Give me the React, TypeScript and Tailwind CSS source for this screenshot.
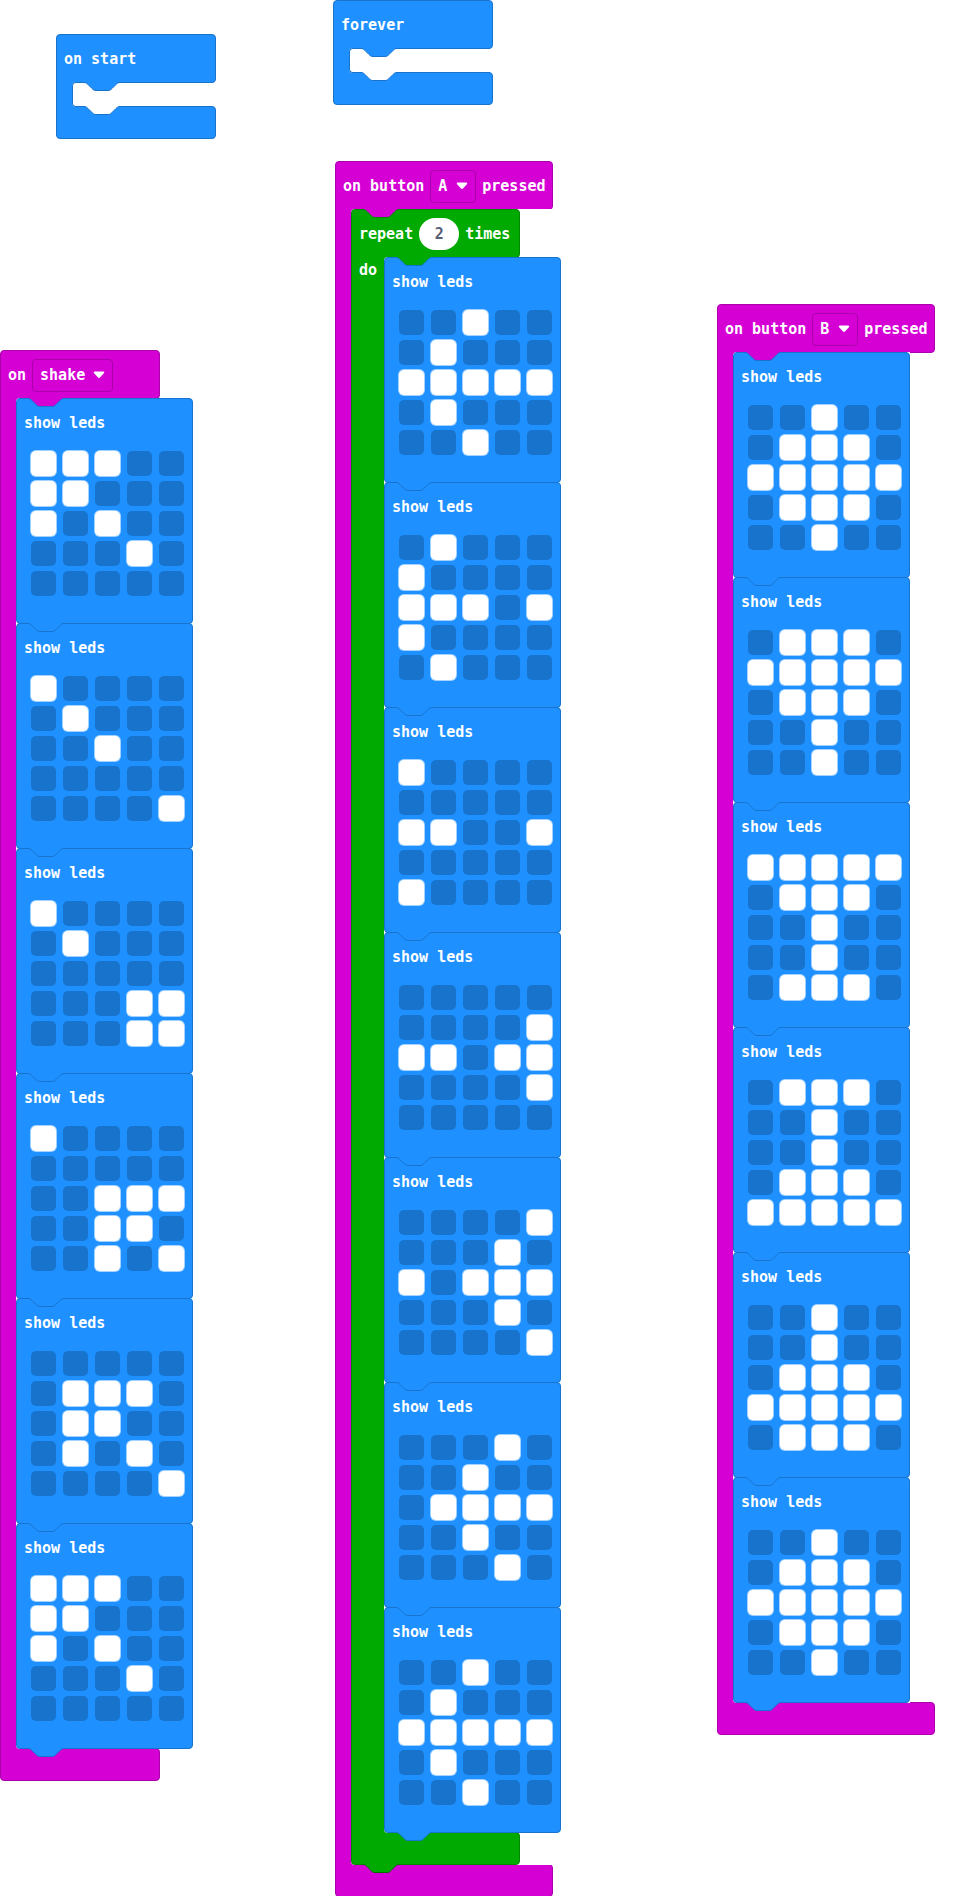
import React, { type ReactNode } from "react";

const SHAKE = [
  ["11100", "11000", "10100", "00010", "00000"],
  ["10000", "01000", "00100", "00000", "00001"],
  ["10000", "01000", "00000", "00011", "00011"],
  ["10000", "00000", "00111", "00110", "00101"],
  ["00000", "01110", "01100", "01010", "00001"],
  ["11100", "11000", "10100", "00010", "00000"],
];

const BUTTON_A = [
  ["00100", "01000", "11111", "01000", "00100"],
  ["01000", "10000", "11101", "10000", "01000"],
  ["10000", "00000", "11001", "00000", "10000"],
  ["00000", "00001", "11011", "00001", "00000"],
  ["00001", "00010", "10111", "00010", "00001"],
  ["00010", "00100", "01111", "00100", "00010"],
  ["00100", "01000", "11111", "01000", "00100"],
];

const BUTTON_B = [
  ["00100", "01110", "11111", "01110", "00100"],
  ["01110", "11111", "01110", "00100", "00100"],
  ["11111", "01110", "00100", "00100", "01110"],
  ["01110", "00100", "00100", "01110", "11111"],
  ["00100", "00100", "01110", "11111", "01110"],
  ["00100", "01110", "11111", "01110", "00100"],
];

type Tone = "blue" | "magenta" | "green";

const TONES: Record<Tone, string> = {
  blue: "bg-[#1e90ff] border-[#1873cc]",
  magenta: "bg-[#d400d4] border-[#aa00aa]",
  green: "bg-[#00aa00] border-[#008800]",
};

const TAB_TONES = {
  blue: "fill-[#1e90ff] stroke-[#1873cc]",
  magentaOnBlue: "fill-[#d400d4] stroke-[#1873cc]",
  magentaOnGreen: "fill-[#d400d4] stroke-[#008800]",
  green: "fill-[#00aa00] stroke-[#007000]",
  greenOnBlue: "fill-[#00aa00] stroke-[#1873cc]",
  white: "fill-white stroke-[#1873cc]",
};

/* Connector that pokes out of one block into the next */
function Tab({ tone, className }: { tone: keyof typeof TAB_TONES; className: string }) {
  const edge = "c2 0 3 1 4 2l4 4c1 1 2 2 4 2h12c2 0 3 -1 4 -2l4 -4c1 -1 2 -2 4 -2";
  return (
    <svg
      aria-hidden="true"
      width="36"
      height="10"
      viewBox="0 0 36 10"
      className={`pointer-events-none absolute z-10 overflow-visible ${TAB_TONES[tone]} ${className}`}
    >
      <path d={`M0 .5${edge}L33 -.2H3Z`} stroke="none" />
      <path d={`M0 .5${edge}`} fill="none" />
    </svg>
  );
}

function Leds({ rows, label }: { rows: string[]; label: string }) {
  return (
    <div className="relative h-[226px] w-[177px] rounded border border-[#1873cc] bg-[#1e90ff]">
      <div className="flex h-[52px] items-start px-[7px] pt-3">
        <span className="leading-6">show leds</span>
      </div>
      <div className="grid w-max grid-cols-5 gap-x-[7px] gap-y-[5px] pl-[14px]">
        {rows.flatMap((row, y) =>
          row.split("").map((led, x) => (
            <input
              key={`${x}-${y}`}
              type="checkbox"
              defaultChecked={led === "1"}
              aria-label={`${label}, led ${x + 1}, ${y + 1}`}
              className="block size-[25px] cursor-pointer appearance-none rounded-[5px] bg-[#1873cc] checked:bg-white checked:ring-1 checked:ring-white/60"
            />
          )),
        )}
      </div>
      <Tab tone="blue" className="top-full left-[11px]" />
    </div>
  );
}

function LedList({ frames, name }: { frames: string[][]; name: string }) {
  return (
    <div className="flex flex-col -space-y-px">
      {frames.map((rows, i) => (
        <Leds key={i} rows={rows} label={`${name} frame ${i + 1}`} />
      ))}
    </div>
  );
}

type WrapProps = {
  tone: Tone;
  width: string;
  arm?: string;
  armLabel?: string;
  header: ReactNode;
  children: ReactNode;
};

/* C-shaped block: header, arm down the left, foot */
function Wrap({ tone, width, arm = "w-5", armLabel, header, children }: WrapProps) {
  const skin = TONES[tone];
  return (
    <section className="relative w-max">
      <div className={`flex h-[49px] items-center rounded rounded-bl-none border px-[7px] pt-px ${skin} ${width}`}>{header}</div>
      <div className="relative -my-px flex">
        <div className={`-mr-1 shrink-0 border-l ${skin} ${arm}`}>
          {armLabel && <span className="block pt-px pl-[7px] leading-6">{armLabel}</span>}
        </div>
        <div className="relative rounded-l bg-white">{children}</div>
      </div>
      <div className={`h-[33px] rounded rounded-tl-none border ${skin} ${width}`} />
    </section>
  );
}

function EmptyWrap({ title }: { title: string }) {
  return (
    <Wrap tone="blue" width="w-[160px]" header={<h2>{title}</h2>}>
      <div className="h-[25px] w-[141px] rounded-l border-y border-l border-[#1873cc]" />
      <Tab tone="blue" className="top-0 left-3" />
      <Tab tone="white" className="top-6 left-3" />
    </Wrap>
  );
}

function Dropdown({ label, options, value, width }: { label: string; options: string[]; value: string; width: string }) {
  return (
    <span className={`relative inline-flex ${width}`}>
      <select
        aria-label={label}
        defaultValue={value}
        className="h-[33px] w-full cursor-pointer appearance-none rounded border border-[#aa00aa] bg-[#d400d4] pl-[7px] text-white outline-none"
      >
        {options.map((o) => (
          <option key={o}>{o}</option>
        ))}
      </select>
      <svg
        aria-hidden="true"
        width="12"
        height="8"
        viewBox="0 0 12 8"
        className="pointer-events-none absolute top-3 right-2 fill-white"
      >
        <path d="M1.7 .6H10.3C11.3 .6 11.5 1.6 10.9 2.3L7.2 6.3C6.5 7.1 5.5 7.1 4.8 6.3L1.1 2.3C.5 1.6 .7 .6 1.7 .6Z" />
      </svg>
    </span>
  );
}

function ButtonHeader({ value }: { value: string }) {
  return (
    <div className="flex items-center gap-[6px]">
      <span>on button</span>
      <Dropdown label="Button" options={["A", "B", "A+B"]} value={value} width="w-[46px]" />
      <span>pressed</span>
    </div>
  );
}

export default function App() {
  return (
    <main className="grid grid-cols-[333fr_384fr_244fr] items-start overflow-hidden bg-white font-['DejaVu_Sans_Mono',monospace] text-[15px] font-bold whitespace-nowrap text-white">
      <div className="flex flex-col gap-[211px] pt-[34px]">
        <div className="pl-14">
          <EmptyWrap title="on start" />
        </div>
        <Wrap
          tone="magenta"
          width="w-[160px]"
          header={
            <div className="flex items-center gap-[6px]">
              <span>on</span>
              <Dropdown label="Gesture" options={["shake", "logo up", "tilt left"]} value="shake" width="w-[81px]" />
            </div>
          }
        >
          <Tab tone="magentaOnBlue" className="top-0 left-3" />
          <LedList frames={SHAKE} name="Shake" />
        </Wrap>
      </div>

      <div className="-mb-px flex flex-col gap-14">
        <EmptyWrap title="forever" />
        <div className="pl-[2px]">
          <Wrap tone="magenta" width="w-[218px]" header={<ButtonHeader value="A" />}>
            <Tab tone="magentaOnGreen" className="top-0 left-3" />
            <Wrap
              tone="green"
              width="w-[169px]"
              arm="w-[37px]"
              armLabel="do"
              header={
                <div className="flex items-center gap-[6px]">
                  <span>repeat</span>
                  <input
                    aria-label="Repeat count"
                    defaultValue="2"
                    inputMode="numeric"
                    className="h-8 w-10 rounded-full bg-white text-center text-[#575e75] outline-none"
                  />
                  <span>times</span>
                </div>
              }
            >
              <Tab tone="greenOnBlue" className="top-0 left-3" />
              <LedList frames={BUTTON_A} name="Button A" />
            </Wrap>
            <Tab tone="green" className="bottom-[-9px] left-3" />
          </Wrap>
        </div>
      </div>

      <div className="pt-[304px]">
        <Wrap tone="magenta" width="w-[218px]" header={<ButtonHeader value="B" />}>
          <Tab tone="magentaOnBlue" className="top-0 left-3" />
          <LedList frames={BUTTON_B} name="Button B" />
        </Wrap>
      </div>
    </main>
  );
}
